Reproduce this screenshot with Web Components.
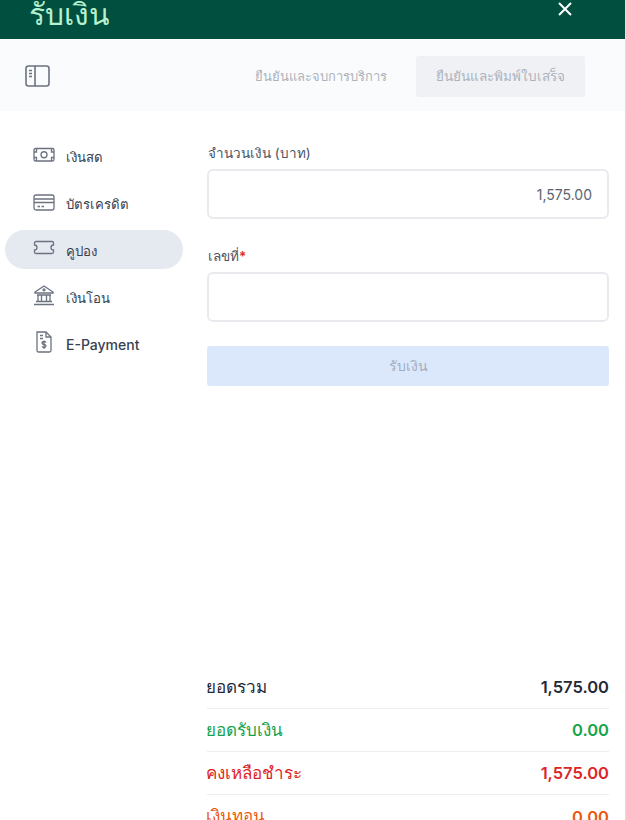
<!DOCTYPE html>
<html lang="th">
<head>
<meta charset="utf-8">
<title>รับเงิน</title>
<style>
  html, body { margin: 0; height: 820px; overflow: hidden; background: #fff; }
  body { font-family: Inter, "Noto Sans", sans-serif; border-right: 1px solid #b5f0e8; box-sizing: border-box; }
</style>
</head>
<body>
<pay-modal></pay-modal>
<script>
const ICONS = {
  cash: '<rect x="1" y="3.500" width="20" height="12.500" rx="1.500"/><circle cx="11" cy="9.750" r="3"/><path d="M1 7h2.500V3.500M21 7h-2.500V3.500M1 12.500h2.500V16M21 12.500h-2.500V16"/>',
  card: '<rect x="1" y="3" width="20" height="15" rx="2"/><path d="M1 7h20M1 10.500h20M4.500 14.500h2.500M8.500 14.500h2.500"/>',
  coupon: '<path d="M3 2.500h16A1.500 1.500 0 0 1 20.500 4v2a2.500 2.500 0 0 0 0 5v2a1.500 1.500 0 0 1-1.500 1.500H3A1.500 1.500 0 0 1 1.500 13v-2a2.500 2.500 0 0 0 0-5V4A1.500 1.500 0 0 1 3 2.500z"/>',
  bank: '<g transform="translate(0 -2)"><path d="M2 8 11 2 20 8v1H2z"/><circle cx="11" cy="5.800" r="1"/><path d="M4 11h14M5 11v6M8.500 11v6M13.500 11v6M17 11v6M3 17.500h16M1 20.500h20"/></g>',
  pay: '<g transform="translate(0 -2)"><path d="M4 1h9l5 5v13.500a1.500 1.500 0 0 1-1.500 1.500h-11A1.500 1.500 0 0 1 4 19.500z"/><path d="M13 1v5h5M7 4.500h3M7 7.500h3"/><path d="M13 11.500c-.4-.7-1.100-1-2-1-1.200 0-2 .6-2 1.500s.8 1.300 2 1.500 2 .6 2 1.500-.8 1.500-2 1.500c-.9 0-1.600-.3-2-1M11 9.500v8.500"/></g>'
};

class ModalHeader extends HTMLElement {
  constructor() {
    super();
    this.attachShadow({ mode: 'open' });
    this.shadowRoot.innerHTML = `
      <style>
        :host { display: flex; height: 39px; background: #004f3f; justify-content: space-between; padding: 0 52px 0 29px; box-sizing: border-box; overflow: hidden; }
        .title { color: #b5f0cf; font-size: 30px; line-height: 28px; font-weight: 500; white-space: nowrap; }
        svg { width: 16px; height: 16px; margin-top: 1px; stroke: #fff; stroke-width: 2; fill: none; }
      </style>
      <div class="title"><slot></slot></div>
      <svg viewBox="0 0 16 16"><path d="M2 2l12 12M14 2L2 14"/></svg>
    `;
  }
}

class ModalToolbar extends HTMLElement {
  constructor() {
    super();
    this.attachShadow({ mode: 'open' });
    this.shadowRoot.innerHTML = `
      <style>
        :host { display: flex; align-items: center; height: 72px; background: #fafbfc; padding: 2px 40px 0 25px; box-sizing: border-box; font-size: 13.500px; color: #adb3bd; }
        svg { width: 25px; height: 25px; stroke: #6b7280; stroke-width: 1.600; fill: none; margin-right: auto; }
        .plain { padding: 0 29px; white-space: nowrap; font-size: 13px; }
        .filled { background: #eff1f4; width: 169px; height: 41px; border-radius: 3px; display: flex; align-items: center; justify-content: center; white-space: nowrap; }
      </style>
      <svg viewBox="0 0 25 25"><rect x="1" y="2" width="23" height="20" rx="2.500"/><path d="M10 2v20M4 6.500h3M4 9.500h3M4 12.500h3"/></svg>
      <div class="plain">ยืนยันและจบการบริการ</div>
      <div class="filled">ยืนยันและพิมพ์ใบเสร็จ</div>
    `;
  }
}

class NavItem extends HTMLElement {
  constructor() {
    super();
    this.attachShadow({ mode: 'open' });
    const icon = ICONS[this.getAttribute('icon')] || '';
    this.shadowRoot.innerHTML = `
      <style>
        :host { display: flex; align-items: center; height: 39px; padding-left: 28px; margin-bottom: 8px; border-radius: 20px; font-size: 13.200px; color: #374151; }
        :host([active]) { background: #e5e9f0; }
        svg { width: 22px; height: 22px; stroke: #6b7280; stroke-width: 1.300; fill: none; margin-right: 11px; flex: none; overflow: visible; }
        .t { white-space: nowrap; padding-top: var(--t-pad, 4px); }
      </style>
      <svg viewBox="0 0 22 22">${icon}</svg>
      <span class="t"><slot></slot></span>
    `;
  }
}

class FormField extends HTMLElement {
  constructor() {
    super();
    this.attachShadow({ mode: 'open' });
    const label = this.getAttribute('label') || '';
    const value = this.getAttribute('value') || '';
    const req = this.hasAttribute('required') ? '<span class="req">*</span>' : '';
    this.shadowRoot.innerHTML = `
      <style>
        :host { display: block; margin-bottom: 27px; }
        label { display: block; font-size: 13.500px; line-height: 20px; color: #4b5563; margin-bottom: 6px; padding-left: 1px; }
        .req { color: #dc2626; font-weight: 600; }
        .box { height: 50px; box-sizing: border-box; border: 2px solid #e8eaed; border-radius: 6px; background: #fff; display: flex; align-items: center; justify-content: flex-end; padding: 0 15px; font-size: 14px; color: #5b6470; }
      </style>
      <label>${label}${req}</label>
      <div class="box">${value}</div>
    `;
  }
}

class SummaryRow extends HTMLElement {
  constructor() {
    super();
    this.attachShadow({ mode: 'open' });
    this.shadowRoot.innerHTML = `
      <style>
        :host { display: flex; justify-content: space-between; align-items: center; height: 43px; box-sizing: border-box; border-bottom: 1px solid #eceef0; color: var(--c, #1f2937); white-space: nowrap; }
        :host(:last-child) { border-bottom: 0; }
        .a { font-size: 17px; margin-left: -1px; padding-bottom: 2px; }
        .v { font-weight: 600; font-size: 16.500px; }
      </style>
      <span class="a">${this.getAttribute('label')}</span>
      <span class="v">${this.getAttribute('value')}</span>
    `;
  }
}

class PayModal extends HTMLElement {
  constructor() {
    super();
    this.attachShadow({ mode: 'open' });
    this.shadowRoot.innerHTML = `
      <style>
        :host { display: flex; flex-direction: column; height: 820px; overflow: hidden; }
        .body { flex: 1; display: grid; grid-template-columns: 178px 1fr; column-gap: 24px; padding: 0 16px 0 5px; }
        nav { padding-top: 25px; }
        main { display: flex; flex-direction: column; padding-top: 32px; min-height: 0; }
        .submit { height: 40px; background: #dbe8fc; border-radius: 3px; display: flex; align-items: center; justify-content: center; font-size: 14px; color: #a3aebc; margin-top: -3px; }
        .summary { margin-top: auto; margin-bottom: -18px; }
      </style>
      <modal-header>รับเงิน</modal-header>
      <modal-toolbar></modal-toolbar>
      <div class="body">
        <nav>
          <nav-item icon="cash">เงินสด</nav-item>
          <nav-item icon="card">บัตรเครดิต</nav-item>
          <nav-item icon="coupon" active>คูปอง</nav-item>
          <nav-item icon="bank">เงินโอน</nav-item>
          <nav-item icon="pay" style="font-size:14px;font-weight:500;--t-pad:2px">E-Payment</nav-item>
        </nav>
        <main>
          <form-field label="จำนวนเงิน (บาท)" value="1,575.00"></form-field>
          <form-field label="เลขที่" required></form-field>
          <div class="submit">รับเงิน</div>
          <div class="summary">
            <summary-row label="ยอดรวม" value="1,575.00"></summary-row>
            <summary-row label="ยอดรับเงิน" value="0.00" style="--c:#16a34a"></summary-row>
            <summary-row label="คงเหลือชำระ" value="1,575.00" style="--c:#dc2626"></summary-row>
            <summary-row label="เงินทอน" value="0.00" style="--c:#ea580c"></summary-row>
          </div>
        </main>
      </div>
    `;
  }
}

customElements.define('modal-header', ModalHeader);
customElements.define('modal-toolbar', ModalToolbar);
customElements.define('nav-item', NavItem);
customElements.define('form-field', FormField);
customElements.define('summary-row', SummaryRow);
customElements.define('pay-modal', PayModal);
</script>
</body>
</html>
